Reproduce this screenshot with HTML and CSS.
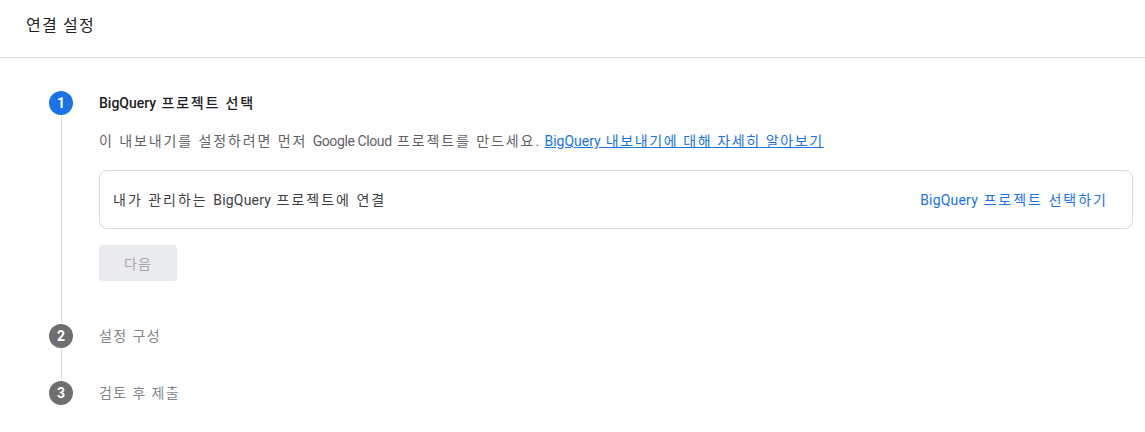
FILE: index.html
```html
<!DOCTYPE html>
<html lang="ko">
<head>
<meta charset="utf-8">
<link rel="stylesheet" href="styles.css">
</head>
<body>
<div class="dialog">
  <header class="header">연결 설정</header>
  <div class="stepper">
    <div class="step active">
      <div class="rail"><span class="num">1</span><span class="line"></span></div>
      <div class="content">
        <div class="title"><span class="en">BigQuery</span> 프로젝트 선택</div>
        <p class="desc">이 내보내기를 설정하려면 먼저 <span class="en">Google Cloud</span> 프로젝트를 만드세요.<span class="gap"> </span><a href="#"><span class="en">BigQuery</span> 내보내기에 대해 자세히 알아보기</a></p>
        <div class="card">
          <span class="card-text">내가 관리하는 <span class="en">BigQuery</span> 프로젝트에 연결</span>
          <a class="card-link" href="#"><span class="en">BigQuery</span> 프로젝트 선택하기</a>
        </div>
        <button class="next" disabled>다음</button>
      </div>
    </div>
    <div class="step second">
      <div class="rail"><span class="num">2</span><span class="line"></span></div>
      <div class="content"><div class="title muted">설정 구성</div></div>
    </div>
    <div class="step last">
      <div class="rail"><span class="num">3</span></div>
      <div class="content"><div class="title muted">검토 후 제출</div></div>
    </div>
  </div>
</div>
</body>
</html>
```

FILE: styles.css
```css
* { box-sizing: border-box; }
html, body { margin: 0; background: #fff; }
body {
  font-family: Roboto, "Noto Sans CJK KR", sans-serif;
  color: #202124;
  font-size: 14px;
}
.en { letter-spacing: 0; }
.dialog {
  background: #fff;
  border-top-left-radius: 8px;
  min-height: 432px;
}
.header {
  height: 58px;
  padding: 15px 0 0 26px;
  font-size: 16px;
  line-height: 22px;
  letter-spacing: 1.2px;
  color: #202124;
  border-bottom: 1px solid #dadce0;
}
.stepper {
  padding: 33px 12px 0 49px;
}
.step {
  display: grid;
  grid-template-columns: 24px 1fr;
  column-gap: 26px;
}
.rail {
  display: flex;
  flex-direction: column;
  align-items: center;
}
.num {
  width: 24px;
  height: 24px;
  border-radius: 50%;
  background: #1a73e8;
  color: #fff;
  font-size: 14px;
  font-weight: 700;
  line-height: 24px;
  text-align: center;
  flex: none;
}
.second .num, .last .num { background: #6f6f6f; }
.line {
  flex: 1;
  width: 1px;
  background: #dadce0;
}
.content { min-width: 0; }
.active .content { padding-bottom: 43px; }
.second .content { padding-bottom: 33px; }
.title {
  line-height: 24px;
  font-size: 14px;
  font-weight: 500;
  letter-spacing: 1.8px;
  color: #202124;
}
.title.muted {
  font-weight: 400;
  letter-spacing: 1.4px;
  color: #80868b;
}
.desc {
  margin: 16px 0 0;
  line-height: 20px;
  letter-spacing: 1.9px;
  color: #5f6368;
}
.desc .en { letter-spacing: -0.4px; }
.desc .gap { letter-spacing: 0; }
.desc a {
  color: #1a73e8;
  text-decoration: underline;
  letter-spacing: 1.6px;
}
.desc a .en { letter-spacing: 0; }
.card {
  margin-top: 19px;
  height: 59px;
  border: 1px solid #dadce0;
  border-radius: 8px;
  display: flex;
  align-items: center;
  justify-content: space-between;
  padding: 0 24px 2px 13px;
  color: #3c4043;
  letter-spacing: 2px;
}
.card .en { letter-spacing: 0.2px; }
.card-link {
  color: #1a73e8;
  text-decoration: none;
}
.next {
  margin-top: 16px;
  width: 78px;
  height: 36px;
  border: none;
  border-radius: 4px;
  background: #e8eaed;
  color: #a6a8ab;
  font-family: inherit;
  font-size: 14px;
  letter-spacing: 1px;
  display: block;
}
```
